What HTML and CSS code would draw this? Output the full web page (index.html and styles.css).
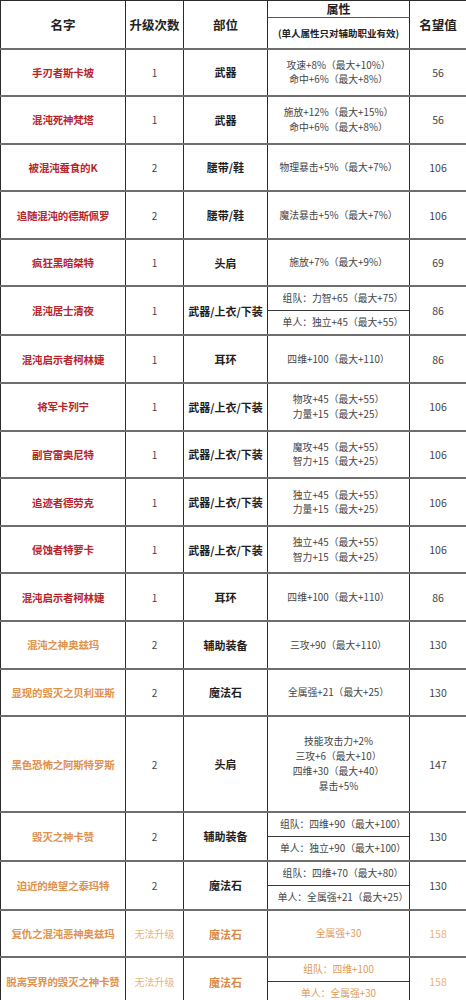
FILE: index.html
```html
<!DOCTYPE html>
<html lang="zh">
<head>
<meta charset="utf-8">
<link rel="stylesheet" href="styles.css">
</head>
<body>
<table class="tbl">
  <colgroup>
    <col class="c1"><col class="c2"><col class="c3"><col class="c4"><col class="c5">
  </colgroup>
  <thead>
    <tr class="h1">
      <th rowspan="2">名字</th>
      <th rowspan="2">升级次数</th>
      <th rowspan="2">部位</th>
      <th class="attr-top">属性</th>
      <th rowspan="2">名望值</th>
    </tr>
    <tr class="h2">
      <th class="attr-sub">(单人属性只对辅助职业有效)</th>
    </tr>
  </thead>
  <tbody>
    <tr><td class="name red">手刃者斯卡坡</td><td class="lv">1</td><td class="part">武器</td><td class="attr">攻速+8%（最大+10%）<br>命中+6%（最大+8%）</td><td class="fame">56</td></tr>
    <tr><td class="name red">混沌死神梵塔</td><td class="lv">1</td><td class="part">武器</td><td class="attr">施放+12%（最大+15%）<br>命中+6%（最大+8%）</td><td class="fame">56</td></tr>
    <tr><td class="name red">被混沌蚕食的K</td><td class="lv">2</td><td class="part">腰带/鞋</td><td class="attr">物理暴击+5%（最大+7%）</td><td class="fame">106</td></tr>
    <tr><td class="name red">追随混沌的德斯佩罗</td><td class="lv">2</td><td class="part">腰带/鞋</td><td class="attr">魔法暴击+5%（最大+7%）</td><td class="fame">106</td></tr>
    <tr><td class="name red">疯狂黑暗桀特</td><td class="lv">1</td><td class="part">头肩</td><td class="attr">施放+7%（最大+9%）</td><td class="fame">69</td></tr>
    <tr><td class="name red">混沌居士清夜</td><td class="lv">1</td><td class="part">武器/上衣/下装</td><td class="attr split"><div class="sub">组队：力智+65（最大+75）</div><div class="sub">单人：独立+45（最大+55）</div></td><td class="fame">86</td></tr>
    <tr><td class="name red">混沌启示者柯林婕</td><td class="lv">1</td><td class="part">耳环</td><td class="attr">四维+100（最大+110）</td><td class="fame">86</td></tr>
    <tr><td class="name red">将军卡列宁</td><td class="lv">1</td><td class="part">武器/上衣/下装</td><td class="attr">物攻+45（最大+55）<br>力量+15（最大+25）</td><td class="fame">106</td></tr>
    <tr><td class="name red">副官雷奥尼特</td><td class="lv">1</td><td class="part">武器/上衣/下装</td><td class="attr">魔攻+45（最大+55）<br>智力+15（最大+25）</td><td class="fame">106</td></tr>
    <tr><td class="name red">追迹者德劳克</td><td class="lv">1</td><td class="part">武器/上衣/下装</td><td class="attr">独立+45（最大+55）<br>力量+15（最大+25）</td><td class="fame">106</td></tr>
    <tr><td class="name red">侵蚀者特萝卡</td><td class="lv">1</td><td class="part">武器/上衣/下装</td><td class="attr">独立+45（最大+55）<br>智力+15（最大+25）</td><td class="fame">106</td></tr>
    <tr><td class="name red">混沌启示者柯林婕</td><td class="lv">1</td><td class="part">耳环</td><td class="attr">四维+100（最大+110）</td><td class="fame">86</td></tr>
    <tr><td class="name orange">混沌之神奥兹玛</td><td class="lv">2</td><td class="part">辅助装备</td><td class="attr">三攻+90（最大+110）</td><td class="fame">130</td></tr>
    <tr><td class="name orange">显现的毁灭之贝利亚斯</td><td class="lv">2</td><td class="part">魔法石</td><td class="attr">全属强+21（最大+25）</td><td class="fame">130</td></tr>
    <tr class="tall"><td class="name orange">黑色恐怖之阿斯特罗斯</td><td class="lv">2</td><td class="part">头肩</td><td class="attr four">技能攻击力+2%<br>三攻+6（最大+10）<br>四维+30（最大+40）<br>暴击+5%</td><td class="fame">147</td></tr>
    <tr><td class="name orange">毁灭之神卡赞</td><td class="lv">2</td><td class="part">辅助装备</td><td class="attr split"><div class="sub">组队：四维+90（最大+100）</div><div class="sub">单人：独立+90（最大+100）</div></td><td class="fame">130</td></tr>
    <tr><td class="name orange">迫近的绝望之泰玛特</td><td class="lv">2</td><td class="part">魔法石</td><td class="attr split"><div class="sub">组队：四维+70（最大+80）</div><div class="sub">单人：全属强+21（最大+25）</div></td><td class="fame">130</td></tr>
    <tr class="gold"><td class="name orange">复仇之混沌恶神奥兹玛</td><td class="lv">无法升级</td><td class="part">魔法石</td><td class="attr">全属强+30</td><td class="fame">158</td></tr>
    <tr class="gold"><td class="name orange">脱离冥界的毁灭之神卡赞</td><td class="lv">无法升级</td><td class="part">魔法石</td><td class="attr split center"><div class="sub">组队：四维+100</div><div class="sub">单人：全属强+30</div></td><td class="fame">158</td></tr>
  </tbody>
</table>
</body>
</html>
```

FILE: styles.css
```css
html, body {
  margin: 0;
  padding: 0;
  background: #ffffff;
}

body {
  font-family: "Noto Sans CJK SC", "Noto Sans", sans-serif;
  color: #333;
}

.tbl {
  width: 466px;
  border-collapse: collapse;
  table-layout: fixed;
}

.c1 { width: 125px; }
.c2 { width: 58px; }
.c3 { width: 84px; }
.c4 { width: 142px; }
.c5 { width: 57px; }

.tbl th,
.tbl td {
  border-left: 1px solid #2b2b2b;
  border-right: 1px solid #2b2b2b;
  border-top: 2px solid #6e6e6e;
  border-bottom: 2px solid #6e6e6e;
  text-align: center;
  vertical-align: middle;
  padding: 0;
}

.tbl th {
  font-size: 12.5px;
  font-weight: bold;
  color: #222;
}

.h1 { height: 17px; }
.h2 { height: 31px; }

.tbl .attr-top {
  font-size: 12px;
  border-bottom: 1px solid #555;
  line-height: 14px;
}

.tbl .attr-sub {
  font-size: 9.5px;
  border-top: 1px solid #555;
}

.tbl thead tr:first-child th {
  border-top: 1px solid #2b2b2b;
}

.tbl tbody tr {
  height: 47.6px;
}

.tbl tbody tr.tall {
  height: 95.6px;
}

.name {
  font-size: 10.5px;
  font-weight: bold;
  letter-spacing: -0.2px;
}

.red { color: #b8242b; }
.orange { color: #e0914c; }

.lv {
  font-size: 10px;
  color: #444;
}

.part {
  font-size: 11px;
  font-weight: bold;
  color: #1e1e1e;
}

.attr {
  font-size: 9.8px;
  line-height: 14.5px;
  color: #444;
}

.attr.four {
  line-height: 15px;
}

.fame {
  font-size: 10.5px;
  color: #444;
}

.tbl td.split {
  height: 100%;
}

.split {
  text-align: left;
}

.split .sub {
  height: 23px;
  line-height: 23px;
  padding-left: 9px;
}

.split .sub:first-child {
  border-bottom: 1px solid #3a3a3a;
}

.split.center {
  text-align: center;
}

.split.center .sub {
  padding-left: 0;
}

.gold .lv,
.gold .fame {
  color: #eab27c;
}

.gold .part {
  color: #d98a45;
}

.gold .attr {
  color: #e09a5c;
}
```
